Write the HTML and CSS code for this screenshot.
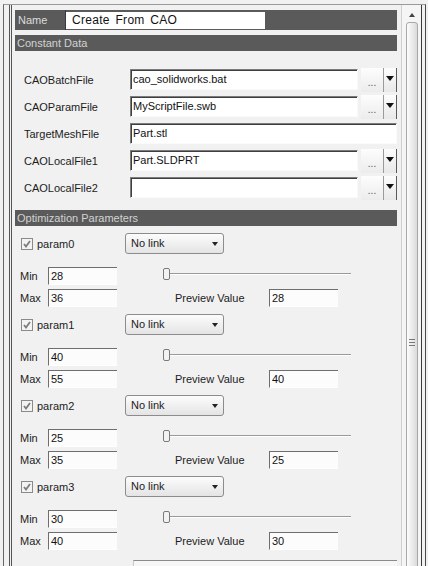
FILE: index.html
```html
<!DOCTYPE html>
<html lang="en">
<head>
    <meta charset="UTF-8">
    <meta name="viewport" content="width=device-width, initial-scale=1.0">
    <title>Create From CAO</title>
    <link rel="stylesheet" href="styles.css">
</head>
<body>

<div class="shell">
    <div class="panel">
        <!-- Name -->
        <div class="name-row">
            <span class="name-label">Name</span>
            <div class="name-field">Create From CAO</div>
        </div>

        <!-- Constant data -->
        <div class="band">Constant Data</div>
        <div class="files">
            <div class="file-row">
                <label>CAOBatchFile</label>
                <div class="field">cao_solidworks.bat</div>
                <span class="btn-dots">...</span>
                <span class="btn-arrow"></span>
            </div>
            <div class="file-row">
                <label>CAOParamFile</label>
                <div class="field">MyScriptFile.swb</div>
                <span class="btn-dots">...</span>
                <span class="btn-arrow"></span>
            </div>
            <div class="file-row">
                <label>TargetMeshFile</label>
                <div class="field wide">Part.stl</div>
            </div>
            <div class="file-row">
                <label>CAOLocalFile1</label>
                <div class="field">Part.SLDPRT</div>
                <span class="btn-dots">...</span>
                <span class="btn-arrow"></span>
            </div>
            <div class="file-row">
                <label>CAOLocalFile2</label>
                <div class="field"></div>
                <span class="btn-dots">...</span>
                <span class="btn-arrow"></span>
            </div>
        </div>

        <!-- Optimization parameters -->
        <div class="band">Optimization Parameters</div>
        <div class="params">
            <div class="param">
                <div class="param-head">
                    <div class="check-wrap">
                        <svg class="check" width="12" height="12" viewBox="0 0 12 12"><rect x="0.5" y="0.5" width="11" height="11" fill="#f3f3f3" stroke="#8a8a8a"/><path d="M3 6 L5 8.5 L9 3" fill="none" stroke="#7d7d7d" stroke-width="1.8"/></svg>
                        <span>param0</span>
                    </div>
                    <div class="link-select">No link<span class="sel-arrow"></span></div>
                </div>
                <div class="param-row">
                    <span class="pl">Min</span>
                    <div class="num">28</div>
                    <div class="slider"><span class="knob"></span></div>
                </div>
                <div class="param-row">
                    <span class="pl">Max</span>
                    <div class="num">36</div>
                    <span class="preview">Preview Value</span>
                    <div class="num">28</div>
                </div>
            </div>

            <div class="param">
                <div class="param-head">
                    <div class="check-wrap">
                        <svg class="check" width="12" height="12" viewBox="0 0 12 12"><rect x="0.5" y="0.5" width="11" height="11" fill="#f3f3f3" stroke="#8a8a8a"/><path d="M3 6 L5 8.5 L9 3" fill="none" stroke="#7d7d7d" stroke-width="1.8"/></svg>
                        <span>param1</span>
                    </div>
                    <div class="link-select">No link<span class="sel-arrow"></span></div>
                </div>
                <div class="param-row">
                    <span class="pl">Min</span>
                    <div class="num">40</div>
                    <div class="slider"><span class="knob"></span></div>
                </div>
                <div class="param-row">
                    <span class="pl">Max</span>
                    <div class="num">55</div>
                    <span class="preview">Preview Value</span>
                    <div class="num">40</div>
                </div>
            </div>

            <div class="param">
                <div class="param-head">
                    <div class="check-wrap">
                        <svg class="check" width="12" height="12" viewBox="0 0 12 12"><rect x="0.5" y="0.5" width="11" height="11" fill="#f3f3f3" stroke="#8a8a8a"/><path d="M3 6 L5 8.5 L9 3" fill="none" stroke="#7d7d7d" stroke-width="1.8"/></svg>
                        <span>param2</span>
                    </div>
                    <div class="link-select">No link<span class="sel-arrow"></span></div>
                </div>
                <div class="param-row">
                    <span class="pl">Min</span>
                    <div class="num">25</div>
                    <div class="slider"><span class="knob"></span></div>
                </div>
                <div class="param-row">
                    <span class="pl">Max</span>
                    <div class="num">35</div>
                    <span class="preview">Preview Value</span>
                    <div class="num">25</div>
                </div>
            </div>

            <div class="param">
                <div class="param-head">
                    <div class="check-wrap">
                        <svg class="check" width="12" height="12" viewBox="0 0 12 12"><rect x="0.5" y="0.5" width="11" height="11" fill="#f3f3f3" stroke="#8a8a8a"/><path d="M3 6 L5 8.5 L9 3" fill="none" stroke="#7d7d7d" stroke-width="1.8"/></svg>
                        <span>param3</span>
                    </div>
                    <div class="link-select">No link<span class="sel-arrow"></span></div>
                </div>
                <div class="param-row">
                    <span class="pl">Min</span>
                    <div class="num">30</div>
                    <div class="slider"><span class="knob"></span></div>
                </div>
                <div class="param-row">
                    <span class="pl">Max</span>
                    <div class="num">40</div>
                    <span class="preview">Preview Value</span>
                    <div class="num">30</div>
                </div>
            </div>

            <div class="next-bar"></div>
        </div>
    </div>

    <!-- Scrollbar -->
    <div class="scrollbar">
        <span class="arrow-up"></span>
        <div class="thumb"><span class="grip"></span></div>
    </div>
</div>

</body>
</html>
```

FILE: styles.css
```css
body {
    margin: 0;
    height: 566px;
    overflow: hidden;
    background-color: #f1f1f1;
    font-family: "Liberation Sans", Arial, sans-serif;
    font-size: 11px;
    color: #1c1c1c;
}

.shell {
    display: flex;
    height: 561px;
    margin: 4px 2px 0 3px;
    padding-right: 3px;
    border-top: 1px solid #9a9a9a;
    border-left: 1px solid #666;
    border-right: 1px solid #4a4a4a;
}

.panel {
    flex: 1;
    margin-left: 5px;
    padding: 5px 4px 0 3px;
    border-left: 3px double #555;
}

/* name header */
.name-row {
    display: flex;
    align-items: center;
    height: 20px;
    background-color: #5a5a5a;
}
.name-label {
    width: 47px;
    padding-left: 3px;
    color: #dcdcdc;
    border-right: 1px solid #3a3a3a;
    line-height: 20px;
}
.name-field {
    width: 193px;
    height: 17px;
    padding-left: 6px;
    background-color: #fff;
    color: #111;
    font-size: 12px;
    letter-spacing: 0.3px;
    word-spacing: 2px;
    line-height: 17px;
}

.band {
    margin-top: 5px;
    height: 16px;
    padding-left: 2px;
    line-height: 16px;
    background-color: #5a5a5a;
    color: #d2d2d2;
}

/* file rows */
.files {
    padding: 18px 0 1px;
}
.file-row {
    display: flex;
    align-items: center;
    height: 21px;
    margin-bottom: 6px;
}
.file-row label {
    width: 106px;
    padding-left: 9px;
}
.field {
    box-sizing: border-box;
    width: 228px;
    height: 21px;
    padding-left: 2px;
    line-height: 19px;
    background-color: #fff;
    border: 1px solid #fafafa;
    border-top-color: #7c7c7c;
    border-left-color: #7c7c7c;
    box-shadow: inset 0 1px 0 #3e3e3e, inset 1px 0 0 #3e3e3e;
    color: #111;
}
.field.wide {
    width: 267px;
}
.btn-dots {
    box-sizing: border-box;
    width: 22px;
    height: 24px;
    margin-left: 3px;
    padding-top: 9px;
    text-align: center;
    color: #555;
    font-size: 10px;
    background: linear-gradient(to bottom, #fdfdfd, #ececec);
}
.btn-arrow {
    box-sizing: border-box;
    position: relative;
    width: 14px;
    height: 24px;
    background: linear-gradient(to bottom, #fdfdfd, #e8e8e8);
    border-left: 1px solid #9a9a9a;
    border-right: 1px solid #5a5a5a;
}
.btn-arrow::after {
    content: "";
    position: absolute;
    left: 2px;
    top: 8px;
    border-left: 4px solid transparent;
    border-right: 4px solid transparent;
    border-top: 5px solid #111;
}

/* parameters */
.params {
    padding-top: 7px;
}
.param {
    margin-bottom: 5px;
}
.param-head {
    display: flex;
    align-items: center;
    height: 21px;
}
.check-wrap {
    display: flex;
    align-items: center;
    gap: 4px;
    width: 104px;
    padding-left: 6px;
}
.link-select {
    box-sizing: border-box;
    position: relative;
    width: 99px;
    height: 21px;
    padding-left: 5px;
    line-height: 18px;
    border: 1px solid #8c8c8c;
    border-radius: 3px;
    background: linear-gradient(to bottom, #fcfcfc, #e4e4e4);
}
.sel-arrow {
    position: absolute;
    right: 5px;
    top: 8px;
    border-left: 3px solid transparent;
    border-right: 3px solid transparent;
    border-top: 4px solid #222;
}
.param-row {
    display: flex;
    align-items: center;
    height: 22px;
}
.param-head + .param-row {
    margin-top: 11px;
}
.pl {
    width: 28px;
    padding-left: 5px;
}
.num {
    box-sizing: border-box;
    width: 69px;
    height: 18px;
    padding-left: 2px;
    line-height: 17px;
    background-color: #fcfcfc;
    border-top: 1px solid #6e6e6e;
    border-left: 1px solid #6e6e6e;
    border-bottom: 1px solid #fff;
    color: #111;
}
.slider {
    position: relative;
    width: 188px;
    height: 12px;
    margin-left: 46px;
    margin-top: -5px;
}
.slider::before {
    content: "";
    position: absolute;
    left: 0;
    right: 0;
    top: 5px;
    border-top: 1px solid #9a9a9a;
    border-bottom: 1px solid #fff;
}
.knob {
    position: absolute;
    left: 0;
    top: 0;
    box-sizing: border-box;
    width: 7px;
    height: 12px;
    border: 1px solid #7a7a7a;
    border-radius: 2px;
    background-color: #f2f2f2;
}
.preview {
    width: 94px;
    margin-left: 58px;
}

.next-bar {
    height: 10px;
    margin: 8px 0 0 118px;
    border-top: 1px solid #8a8a8a;
    border-left: 1px solid #c8c8c8;
    background-color: #f7f7f7;
}

/* scrollbar */
.scrollbar {
    display: flex;
    flex-direction: column;
    align-items: center;
    width: 20px;
    border-left: 1px solid #d0d0d0;
    border-right: 1px solid #3a3a3a;
    background-color: #f5f5f5;
}
.arrow-up {
    margin-top: 8px;
    border-left: 3px solid transparent;
    border-right: 3px solid transparent;
    border-bottom: 4px solid #444;
}
.thumb {
    box-sizing: border-box;
    flex: 1;
    width: 12px;
    margin-top: 5px;
    margin-bottom: -10px;
    border: 1px solid #a8a8a8;
    border-radius: 3px;
    background: linear-gradient(to right, #fdfdfd, #dadada);
}
.grip {
    display: block;
    width: 6px;
    height: 5px;
    margin: 316px auto 0;
    border-top: 1px solid #777;
    border-bottom: 1px solid #777;
    position: relative;
}
.grip::after {
    content: "";
    position: absolute;
    left: 0;
    right: 0;
    top: 2px;
    border-top: 1px solid #777;
}
```
